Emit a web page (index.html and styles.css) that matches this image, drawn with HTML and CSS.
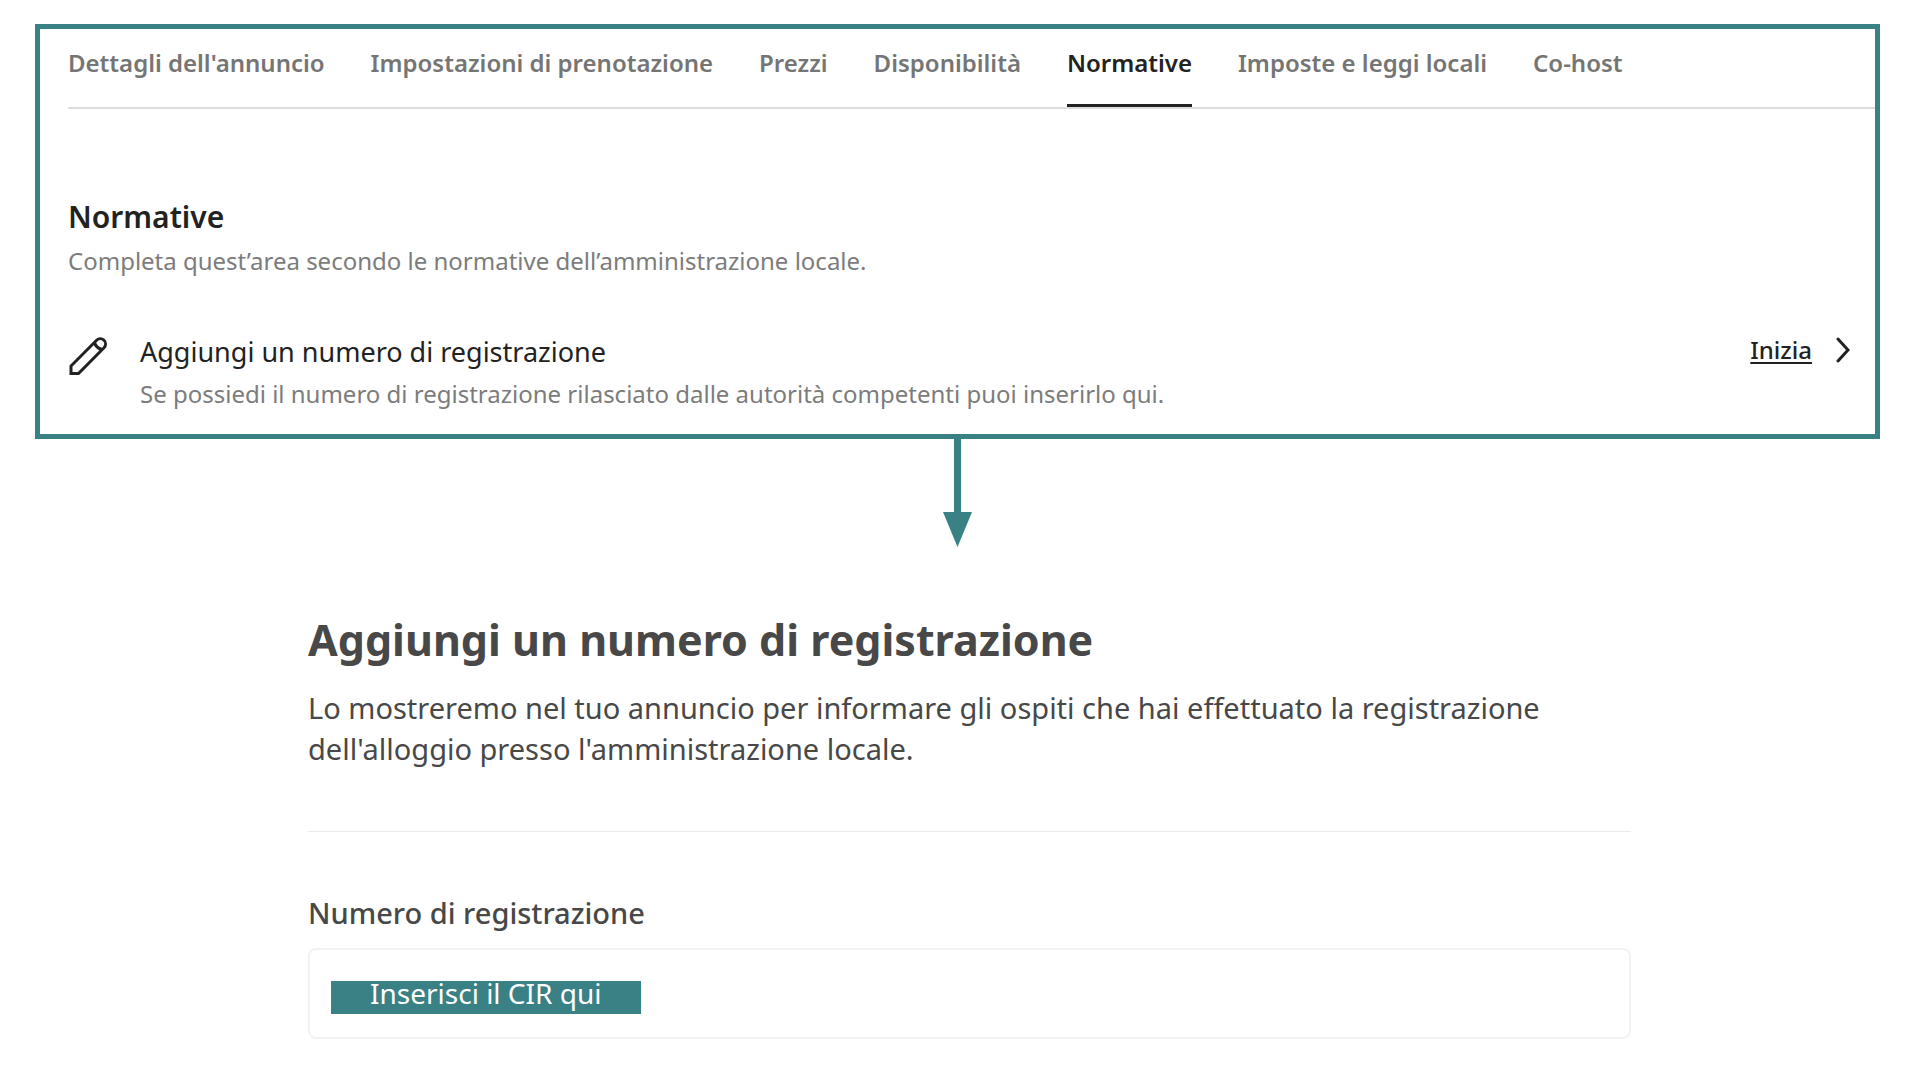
FILE: index.html
```html
<!DOCTYPE html>
<html lang="it">
<head>
  <meta charset="utf-8">
  <meta name="viewport" content="width=device-width, initial-scale=1">
  <title>Normative</title>
  <link rel="stylesheet" href="styles.css">
</head>
<body>
  <section class="panel">
    <nav class="tabs" aria-label="Sezioni dell'annuncio">
      <a class="tab" href="#dettagli">Dettagli dell'annuncio</a>
      <a class="tab" href="#prenotazione">Impostazioni di prenotazione</a>
      <a class="tab" href="#prezzi">Prezzi</a>
      <a class="tab" href="#disponibilita">Disponibilità</a>
      <a class="tab tab-active" href="#normative" aria-current="page">Normative</a>
      <a class="tab" href="#imposte">Imposte e leggi locali</a>
      <a class="tab" href="#cohost">Co-host</a>
    </nav>

    <header class="panel-head" id="normative">
      <h2 class="panel-title">Normative</h2>
      <p class="note">Completa quest’area secondo le normative dell’amministrazione locale.</p>
    </header>

    <div class="task">
      <svg class="pencil" viewBox="0 0 40 40" aria-hidden="true">
        <path d="M3 36.500V29L28.600 3.300A5.200 5.200 0 0 1 36 10.700L10.500 36.500Z"/>
        <path d="M26.500 5.500Q28 11 34 12.500"/>
      </svg>
      <div class="task-body">
        <h3 class="task-title">Aggiungi un numero di registrazione</h3>
        <p class="note">Se possiedi il numero di registrazione rilasciato dalle autorità competenti puoi inserirlo qui.</p>
      </div>
      <a class="start" href="#registrazione">
        <span class="start-text">Inizia</span>
        <svg class="chevron" viewBox="0 0 14 26" aria-hidden="true"><path d="M2 2L12 13L2 24"/></svg>
      </a>
    </div>
  </section>

  <svg class="arrow" viewBox="0 0 29 108" aria-hidden="true">
    <path d="M11 0H18V73H29L14.500 108L0 73H11Z"/>
  </svg>

  <main class="form" id="registrazione">
    <h1 class="form-title">Aggiungi un numero di registrazione</h1>
    <p class="form-text">Lo mostreremo nel tuo annuncio per informare gli ospiti che hai effettuato la registrazione dell'alloggio presso l'amministrazione locale.</p>
    <hr class="rule">
    <label class="label" for="cir">Numero di registrazione</label>
    <input class="field" id="cir" type="text" value="Inserisci il CIR qui">
  </main>
</body>
</html>
```
FILE: styles.css
```css
:root {
  --teal: #398185;
  --ink: #222222;
  --ink-soft: #484848;
  --muted: #757575;
}

* {
  box-sizing: border-box;
}

body {
  margin: 0;
  padding: 24px 40px 24px 35px;
  background: #ffffff;
  color: var(--ink);
  font-family: "Noto Sans", sans-serif;
  font-size: 24px;
  line-height: 32px;
}

h1, h2, h3, p {
  margin: 0;
}

.panel {
  padding: 18px 0 24px 28px;
  border: 5px solid var(--teal);
}

.tabs {
  display: flex;
  gap: 46px;
  border-bottom: 2px solid #dddddd;
}

.tab {
  padding-bottom: 25px;
  border-bottom: 3px solid transparent;
  color: var(--muted);
  font-weight: 600;
  text-decoration: none;
  white-space: nowrap;
}

.tab-active {
  border-color: var(--ink);
  color: var(--ink);
}

.panel-head {
  display: grid;
  gap: 8px;
  margin-top: 88px;
}

.panel-title {
  font-size: 30px;
  font-weight: 600;
  line-height: 40px;
}

.note {
  color: #7c7c7c;
}

.task {
  display: flex;
  align-items: flex-start;
  gap: 32px;
  margin-top: 57px;
  padding-right: 25px;
}

.task-body {
  display: grid;
  flex: 1;
  gap: 8px;
}

.task-title {
  font-size: 27px;
  font-weight: 400;
  line-height: 36px;
}

.pencil {
  flex: none;
  width: 40px;
  height: 40px;
  margin-top: 3px;
  fill: none;
  stroke: var(--ink);
  stroke-width: 3;
}

.start {
  display: flex;
  align-items: center;
  gap: 24px;
  color: var(--ink);
  font-weight: 500;
  text-decoration: none;
}

.start-text {
  text-decoration: underline;
  text-decoration-thickness: 2px;
  text-underline-offset: 3px;
}

.chevron {
  width: 14px;
  height: 26px;
  fill: none;
  stroke: var(--ink);
  stroke-width: 3;
  stroke-linecap: round;
}

.arrow {
  display: block;
  width: 29px;
  height: 108px;
  margin: 0 auto;
  fill: var(--teal);
}

.form {
  margin: 65px 249px 0 273px;
  color: var(--ink-soft);
}

.form-title {
  font-size: 43px;
  font-weight: 700;
  line-height: 56px;
}

.form-text {
  margin-top: 19px;
  font-size: 29px;
  line-height: 41px;
}

.rule {
  height: 1px;
  margin: 62px 0 61px;
  border: 0;
  background: #ebebeb;
}

.label {
  display: block;
  font-size: 29px;
  font-weight: 500;
  line-height: 40px;
}

/* The prompt inside the field sits on a teal highlight bar. */
.field {
  display: block;
  width: 100%;
  height: 91px;
  margin-top: 15px;
  padding: 24px 60px 25px;
  border: 2px solid #f2f2f2;
  border-radius: 8px;
  background: linear-gradient(var(--teal), var(--teal)) 21px 31px / 310px 33px no-repeat;
  color: #ffffff;
  font-family: inherit;
  font-size: 28px;
}
```
